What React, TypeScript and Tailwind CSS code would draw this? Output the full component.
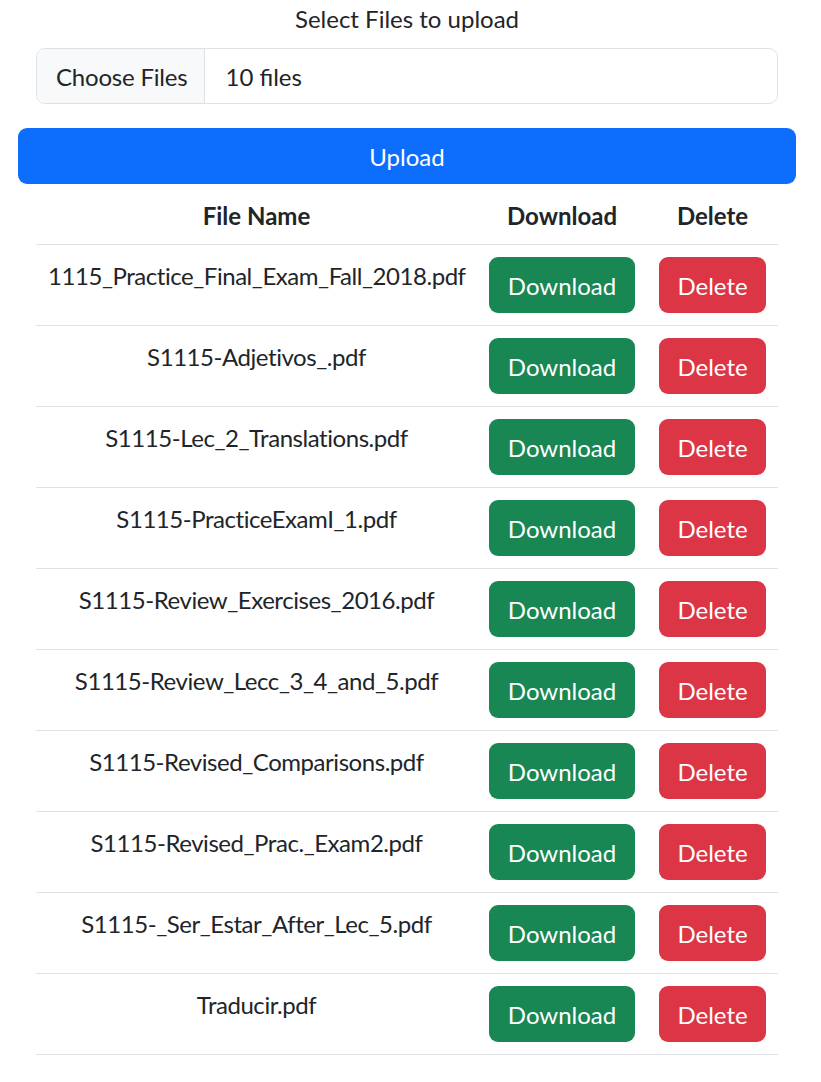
import React from 'react';

const files = [
  '1115_Practice_Final_Exam_Fall_2018.pdf',
  'S1115-Adjetivos_.pdf',
  'S1115-Lec_2_Translations.pdf',
  'S1115-PracticeExamI_1.pdf',
  'S1115-Review_Exercises_2016.pdf',
  'S1115-Review_Lecc_3_4_and_5.pdf',
  'S1115-Revised_Comparisons.pdf',
  'S1115-Revised_Prac._Exam2.pdf',
  'S1115-_Ser_Estar_After_Lec_5.pdf',
  'Traducir.pdf',
];

export default function App() {
  return (
    <div className="w-[821px] min-h-[1082px] bg-white text-[#212529] text-[24px] leading-[36px] font-['Lato','Liberation_Sans',sans-serif]">
      <div className="w-[814px] px-[18px] pt-[1px]">
        <div className="text-center">Select Files to upload</div>

        {/* file picker */}
        <div className="mx-[18px] mt-[11px] flex h-[56px] rounded-[9px] border border-[#dee2e6] overflow-hidden">
          <div className="flex items-center pl-[19px] pr-[17px] pt-[2px] bg-[#f8f9fa] border-r border-[#dee2e6] tracking-[-0.2px]">Choose Files</div>
          <div className="flex items-center px-[20px] pt-[2px]">10 files</div>
        </div>

        <button className="mt-[24px] w-full h-[56px] pt-[2px] rounded-[9px] bg-[#0d6efd] text-white">Upload</button>

        <table className="mx-[18px] w-[742px] table-fixed border-collapse align-top">
          <colgroup>
            <col className="w-[441px]" />
            <col className="w-[170px]" />
            <col className="w-[131px]" />
          </colgroup>
          <thead>
            <tr className="border-b border-[#dee2e6]">
              <th className="px-[12px] pt-[14px] pb-[10px] font-bold text-center">File Name</th>
              <th className="px-[12px] pt-[14px] pb-[10px] font-bold text-center">Download</th>
              <th className="px-[12px] pt-[14px] pb-[10px] font-bold text-center">Delete</th>
            </tr>
          </thead>
          <tbody>
            {files.map(f => (
              <tr key={f} className="border-b border-[#dee2e6]">
                <td className="px-[12px] pt-[13px] pb-[11px] text-center align-top whitespace-nowrap tracking-[-0.45px]">{f}</td>
                <td className="px-[12px] py-[12px] text-center align-top">
                  <button className="h-[56px] w-[146px] pt-[2px] rounded-[9px] bg-[#198754] text-white">Download</button>
                </td>
                <td className="px-[12px] py-[12px] text-center align-top">
                  <button className="h-[56px] w-[107px] pt-[2px] rounded-[9px] bg-[#dc3545] text-white">Delete</button>
                </td>
              </tr>
            ))}
          </tbody>
        </table>
      </div>
    </div>
  );
}
